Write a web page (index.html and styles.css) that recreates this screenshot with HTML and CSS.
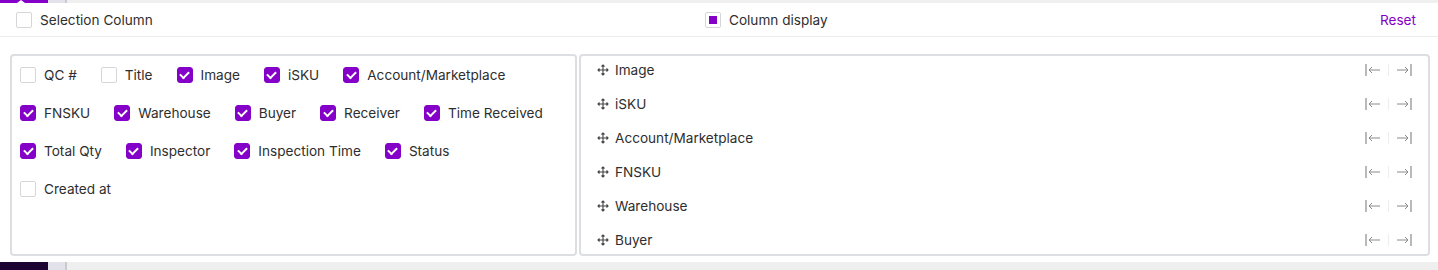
FILE: index.html
```html
<!DOCTYPE html>
<html lang="en">
<head>
    <meta charset="UTF-8">
    <meta name="viewport" content="width=device-width, initial-scale=1.0">
    <title>Column Settings</title>
    <link rel="stylesheet" href="styles.css">
</head>
<body>
    <div class="strip strip-top">
        <span class="strip-nav"></span>
        <span class="strip-side"></span>
        <span class="strip-rest"></span>
    </div>
    <div class="panel">
        <div class="panel-header">
            <label class="check-item">
                <span class="box"></span>
                <span>Selection Column</span>
            </label>
            <label class="check-item">
                <span class="box partial"></span>
                <span>Column display</span>
            </label>
            <a class="reset-link">Reset</a>
        </div>
        <div class="panel-body">
            <div class="column-options">
                <label class="check-item"><span class="box"></span><span>QC #</span></label>
                <label class="check-item"><span class="box"></span><span>Title</span></label>
                <label class="check-item"><span class="box checked"></span><span>Image</span></label>
                <label class="check-item"><span class="box checked"></span><span>iSKU</span></label>
                <label class="check-item"><span class="box checked"></span><span>Account/Marketplace</span></label>
                <span class="break"></span>
                <label class="check-item"><span class="box checked"></span><span>FNSKU</span></label>
                <label class="check-item"><span class="box checked"></span><span>Warehouse</span></label>
                <label class="check-item"><span class="box checked"></span><span>Buyer</span></label>
                <label class="check-item"><span class="box checked"></span><span>Receiver</span></label>
                <label class="check-item"><span class="box checked"></span><span>Time Received</span></label>
                <span class="break"></span>
                <label class="check-item"><span class="box checked"></span><span>Total Qty</span></label>
                <label class="check-item"><span class="box checked"></span><span>Inspector</span></label>
                <label class="check-item"><span class="box checked"></span><span>Inspection Time</span></label>
                <label class="check-item"><span class="box checked"></span><span>Status</span></label>
                <span class="break"></span>
                <label class="check-item"><span class="box"></span><span>Created at</span></label>
            </div>
            <div class="column-order">
                <div class="order-row">
                    <svg class="drag" viewBox="0 0 12 12"><path d="M6 1v10M1 6h10M4.5 2.5L6 1l1.5 1.5M4.5 9.5L6 11l1.5-1.5M2.5 4.5L1 6l1.5 1.5M9.5 4.5L11 6l-1.5 1.5"/></svg>
                    <span class="order-name">Image</span>
                    <span class="pin"><svg viewBox="0 0 16 12"><path class="bar" d="M1 0v12"/><path d="M4 6h11M7 3L4 6l3 3"/></svg></span>
                    <span class="pin-sep"></span>
                    <span class="pin"><svg viewBox="0 0 16 12"><path class="bar" d="M15 0v12"/><path d="M1 6h11M9 3l3 3-3 3"/></svg></span>
                </div>
                <div class="order-row">
                    <svg class="drag" viewBox="0 0 12 12"><path d="M6 1v10M1 6h10M4.5 2.5L6 1l1.5 1.5M4.5 9.5L6 11l1.5-1.5M2.5 4.5L1 6l1.5 1.5M9.5 4.5L11 6l-1.5 1.5"/></svg>
                    <span class="order-name">iSKU</span>
                    <span class="pin"><svg viewBox="0 0 16 12"><path class="bar" d="M1 0v12"/><path d="M4 6h11M7 3L4 6l3 3"/></svg></span>
                    <span class="pin-sep"></span>
                    <span class="pin"><svg viewBox="0 0 16 12"><path class="bar" d="M15 0v12"/><path d="M1 6h11M9 3l3 3-3 3"/></svg></span>
                </div>
                <div class="order-row">
                    <svg class="drag" viewBox="0 0 12 12"><path d="M6 1v10M1 6h10M4.5 2.5L6 1l1.5 1.5M4.5 9.5L6 11l1.5-1.5M2.5 4.5L1 6l1.5 1.5M9.5 4.5L11 6l-1.5 1.5"/></svg>
                    <span class="order-name">Account/Marketplace</span>
                    <span class="pin"><svg viewBox="0 0 16 12"><path class="bar" d="M1 0v12"/><path d="M4 6h11M7 3L4 6l3 3"/></svg></span>
                    <span class="pin-sep"></span>
                    <span class="pin"><svg viewBox="0 0 16 12"><path class="bar" d="M15 0v12"/><path d="M1 6h11M9 3l3 3-3 3"/></svg></span>
                </div>
                <div class="order-row">
                    <svg class="drag" viewBox="0 0 12 12"><path d="M6 1v10M1 6h10M4.5 2.5L6 1l1.5 1.5M4.5 9.5L6 11l1.5-1.5M2.5 4.5L1 6l1.5 1.5M9.5 4.5L11 6l-1.5 1.5"/></svg>
                    <span class="order-name">FNSKU</span>
                    <span class="pin"><svg viewBox="0 0 16 12"><path class="bar" d="M1 0v12"/><path d="M4 6h11M7 3L4 6l3 3"/></svg></span>
                    <span class="pin-sep"></span>
                    <span class="pin"><svg viewBox="0 0 16 12"><path class="bar" d="M15 0v12"/><path d="M1 6h11M9 3l3 3-3 3"/></svg></span>
                </div>
                <div class="order-row">
                    <svg class="drag" viewBox="0 0 12 12"><path d="M6 1v10M1 6h10M4.5 2.5L6 1l1.5 1.5M4.5 9.5L6 11l1.5-1.5M2.5 4.5L1 6l1.5 1.5M9.5 4.5L11 6l-1.5 1.5"/></svg>
                    <span class="order-name">Warehouse</span>
                    <span class="pin"><svg viewBox="0 0 16 12"><path class="bar" d="M1 0v12"/><path d="M4 6h11M7 3L4 6l3 3"/></svg></span>
                    <span class="pin-sep"></span>
                    <span class="pin"><svg viewBox="0 0 16 12"><path class="bar" d="M15 0v12"/><path d="M1 6h11M9 3l3 3-3 3"/></svg></span>
                </div>
                <div class="order-row">
                    <svg class="drag" viewBox="0 0 12 12"><path d="M6 1v10M1 6h10M4.5 2.5L6 1l1.5 1.5M4.5 9.5L6 11l1.5-1.5M2.5 4.5L1 6l1.5 1.5M9.5 4.5L11 6l-1.5 1.5"/></svg>
                    <span class="order-name">Buyer</span>
                    <span class="pin"><svg viewBox="0 0 16 12"><path class="bar" d="M1 0v12"/><path d="M4 6h11M7 3L4 6l3 3"/></svg></span>
                    <span class="pin-sep"></span>
                    <span class="pin"><svg viewBox="0 0 16 12"><path class="bar" d="M15 0v12"/><path d="M1 6h11M9 3l3 3-3 3"/></svg></span>
                </div>
            </div>
        </div>
    </div>
    <div class="strip strip-bottom">
        <span class="strip-nav"></span>
        <span class="strip-side"></span>
        <span class="strip-rest"></span>
    </div>
</body>
</html>
```

FILE: styles.css
```css
body {
    margin: 0;
    font-family: Inter, "Noto Sans", sans-serif;
    font-size: 13.6px;
    color: #2e2e2e;
    background-color: #f1f1f2;
    height: 270px;
    overflow: hidden;
}
.strip {
    display: flex;
}
.strip-top {
    height: 3px;
}
.strip-bottom {
    height: 8px;
}
.strip-nav {
    width: 48px;
    background-color: #8400c8;
    position: relative;
}
.strip-top .strip-nav::after {
    content: "";
    position: absolute;
    left: 17px;
    bottom: 0;
    border-left: 4px solid transparent;
    border-right: 4px solid transparent;
    border-bottom: 3px solid #fff;
}
.strip-bottom .strip-nav {
    background-color: #1c0433;
}
.strip-side {
    width: 17px;
    background-color: #e3e1ea;
    border-right: 2px solid #c9c9cf;
}
.strip-rest {
    flex: 1;
    background-color: #efeff0;
}
.panel {
    background-color: #fff;
    height: 259px;
    box-shadow: 0 2px 4px rgba(0, 0, 0, 0.08);
    display: flex;
    flex-direction: column;
}
.panel-header {
    display: grid;
    grid-template-columns: 689px 1fr auto;
    align-items: center;
    height: 33px;
    padding: 0 22px 0 16px;
    border-bottom: 1px solid #ececee;
}
.check-item {
    display: inline-flex;
    align-items: center;
    gap: 8px;
    white-space: nowrap;
}
.box {
    width: 14px;
    height: 14px;
    border: 1px solid #d6d6da;
    border-radius: 2px;
    background-color: #fff;
    display: inline-flex;
    align-items: center;
    justify-content: center;
    flex-shrink: 0;
}
.box.partial::after {
    content: "";
    width: 8px;
    height: 8px;
    background-color: #8400c8;
}
.box.checked {
    background-color: #8400c8;
    border-color: #8400c8;
    border-radius: 3px;
}
.box.checked::after {
    content: "";
    width: 7px;
    height: 4px;
    border-left: 2px solid #fff;
    border-bottom: 2px solid #fff;
    transform: translate(0, -1px) rotate(-45deg);
}
.reset-link {
    color: #8400c8;
    cursor: pointer;
}
.panel-body {
    display: flex;
    gap: 2px;
    padding: 17px 8px 0 10px;
}
.column-options,
.column-order {
    height: 202px;
    border: 2px solid #dcdee2;
    border-radius: 4px;
    box-sizing: border-box;
    overflow: hidden;
}
.column-options {
    width: 567px;
    display: flex;
    flex-wrap: wrap;
    align-content: flex-start;
    column-gap: 24px;
    padding: 0 8px;
}
.column-options .check-item {
    height: 38px;
}
.break {
    flex-basis: 100%;
    height: 0;
}
.column-order {
    flex: 1;
    padding: 0 16px;
}
.order-row {
    display: flex;
    align-items: center;
    height: 34px;
}
.order-row:first-child {
    margin-top: -3px;
}
.drag {
    width: 12px;
    height: 12px;
    fill: none;
    stroke: #444;
    stroke-width: 1.1;
    margin-right: 6px;
}
.order-name {
    flex: 1;
}
.pin svg {
    display: block;
    width: 16px;
    height: 14px;
    fill: none;
    stroke: #8a8a8a;
    stroke-width: 1;
}
.pin .bar {
    stroke: #a8a8a8;
    stroke-width: 1.6;
}
.pin-sep {
    width: 1px;
    height: 12px;
    background-color: #eeeeee;
    margin: 0 7px;
}
```
